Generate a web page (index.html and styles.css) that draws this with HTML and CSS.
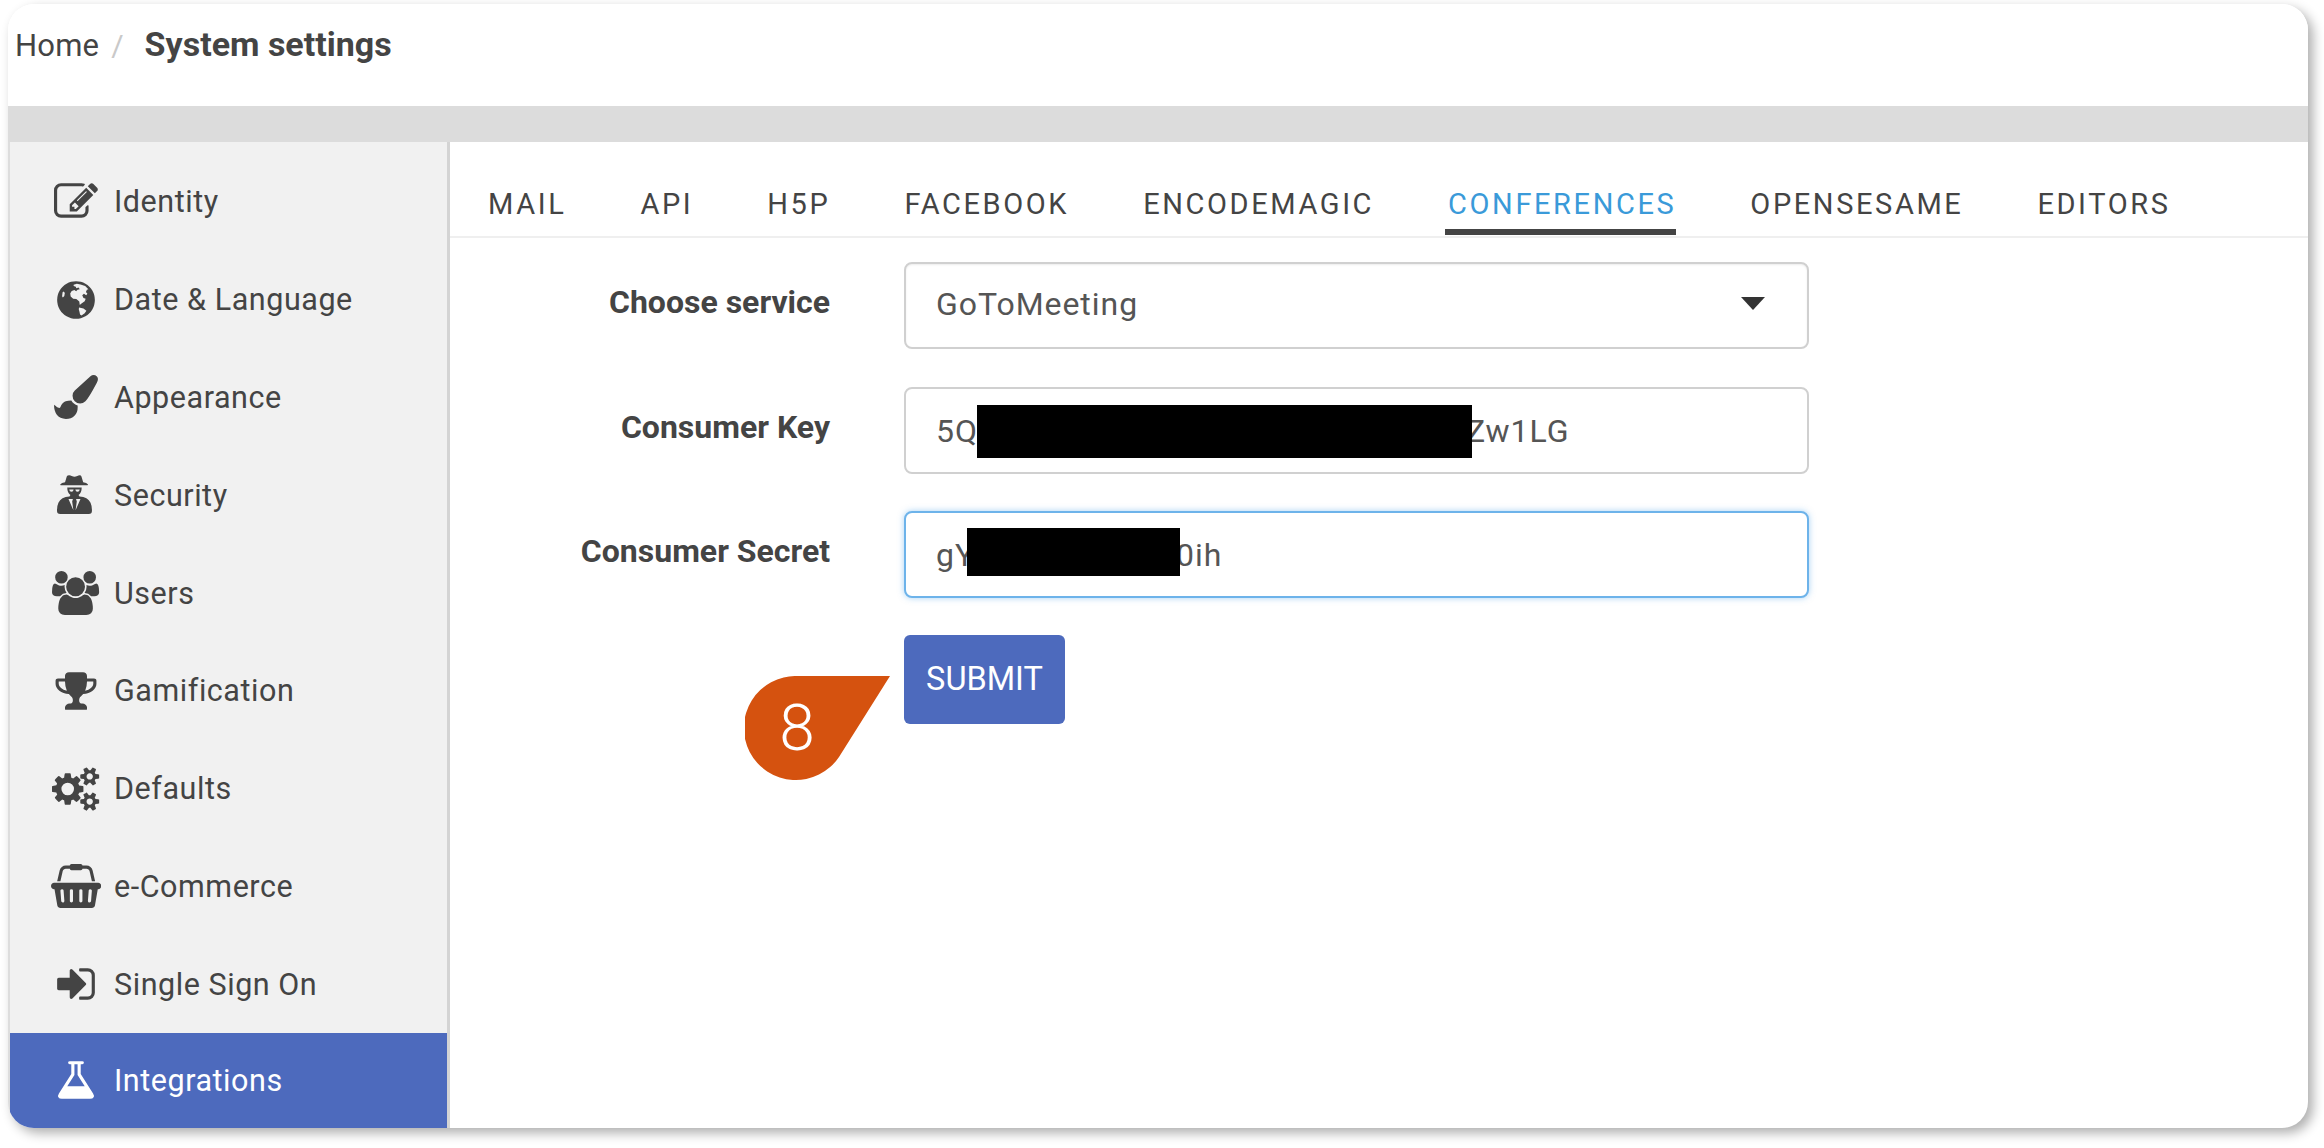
FILE: index.html
```html
<!DOCTYPE html>
<html lang="en">
<head>
<meta charset="utf-8">
<title>System settings</title>
<link rel="stylesheet" href="styles.css">
</head>
<body>
<div class="card">
  <header class="crumbs">
    <span class="crumb">Home</span>
    <span class="crumb-sep">/</span>
    <span class="crumb-current">System settings</span>
  </header>
  <div class="band"></div>
  <div class="content">
    <nav class="side">
      <a class="item"><span class="ico"><svg viewBox="0 0 1792 1792"><path d="M888 1184l116-116-152-152-116 116v56h96v96h56zm440-720q-16-16-33 1l-350 350q-17 17-1 33t33-1l350-350q17-17 1-33zm80 594v190q0 119-84.5 203.5t-203.5 84.5h-832q-119 0-203.5-84.5t-84.5-203.5v-832q0-119 84.5-203.5t203.5-84.5h832q63 0 117 25 15 7 18 23 3 17-9 29l-49 49q-14 14-32 8-23-6-45-6h-832q-66 0-113 47t-47 113v832q0 66 47 113t113 47h832q66 0 113-47t47-113v-126q0-13 9-22l64-64q15-15 35-7t20 29zm-96-738l288 288-672 672h-288v-288zm444 132l-92 92-288-288 92-92q28-28 68-28t68 28l152 152q28 28 28 68t-28 68z"/></svg></span>Identity</a>
      <a class="item"><span class="ico"><svg viewBox="0 0 1792 1792"><path fill-rule="evenodd" d="M896 128a768 768 0 1 0 .01 0zM800 270l130-40 150 30 190 70 130 130-60 20-40 90 60 70-50 60-90-60-70 60 50 110 90 40-40 100-130 90-70 60-20-140-120-100-130-20-100-90-20-120 60-100 110-40 70 50 60-60 90-20-50-70-90 30-20-60-90-30zM1020 1200l180 40 120 90-70 110-130 90-60-40-20-110-30-110zM350 580l50-30 40 60-20 120-60 60-30-50z"/></svg></span>Date &amp; Language</a>
      <a class="item"><span class="ico"><svg viewBox="0 0 1792 1792"><path d="M1615 0q70 0 122.5 46.5t52.5 116.5q0 63-45 151-332 629-465 752-97 91-218 91-126 0-216.5-92.5t-90.5-219.5q0-128 92-212l638-579q59-54 130-54zm-909 1034q39 76 106.5 130t150.5 76l1 71q4 213-129.5 347t-348.5 134q-123 0-218-46.5t-152.5-127.5-86.5-183-29-220q7 5 41 30t62 44.5 59 36.5 46 17q41 0 55-37 25-66 57.5-112.5t69.5-76 88-47.5 103-25.5 125-10.5z"/></svg></span>Appearance</a>
      <a class="item"><span class="ico"><svg viewBox="0 0 1792 1792"><path fill-rule="evenodd" d="M620 90q50 0 100 30 60 30 114 30t114-30q50-30 100-30 50 0 70 50l70 240q140 25 200 90l-20 30H270l-20-30q60-65 200-90l70-240q20-50 100-50zM540 590H1128q0 220-130 310l40 60q340 20 450 250 58 120 58 330 0 130-130 130H252q-130 0-130-130 0-210 58-330 110-230 450-250l40-60q-130-90-130-310zM620 670H800q-10 90-90 90-80 0-90-90zM868 670H1048q-10 90-90 90-80 0-90-90zM590 1060H770L740 1160 790 1520zM1078 1060H898L928 1160 878 1520z"/></svg></span>Security</a>
      <a class="item"><span class="ico"><svg viewBox="0 0 1920 1792"><path transform="translate(64 0)" d="M529 896q-162 5-265 128h-134q-82 0-138-40.5t-56-118.5q0-353 124-353 6 0 43.5 21t97.5 42.5 119 21.5q67 0 133-23-5 37-5 66 0 139 81 256zm1071 637q0 120-73 189.5t-194 69.5h-874q-121 0-194-69.5t-73-189.5q0-53 3.5-103.5t14-109 26.5-108.5 43-97.5 62-81 85.5-53.5 111.5-20q10 0 43 21.5t73 48 107 48 135 21.5 135-21.5 107-48 73-48 43-21.5q61 0 111.5 20t85.5 53.5 62 81 43 97.5 26.5 108.5 14 109 3.5 103.5zm-1024-1277q0 106-75 181t-181 75-181-75-75-181 75-181 181-75 181 75 75 181zm704 384q0 159-112.5 271.5t-271.5 112.5-271.5-112.5-112.5-271.5 112.5-271.5 271.5-112.5 271.5 112.5 112.5 271.5zm576 225q0 78-56 118.5t-138 40.5h-134q-103-123-265-128 81-117 81-256 0-29-5-66 66 23 133 23 59 0 119-21.5t97.5-42.5 43.5-21q124 0 124 353zm-128-609q0 106-75 181t-181 75-181-75-75-181 75-181 181-75 181 75 75 181z"/></svg></span>Users</a>
      <a class="item"><span class="ico"><svg viewBox="0 0 1792 1792"><path d="M522 883q-74-162-74-371h-256v96q0 78 94.5 162t235.5 113zm1078-275v-96h-256q0 209-74 371 141-29 235.5-113t94.5-162zm128-128v128q0 71-41.5 143t-112 130-173 97.5-215.5 44.5q-42 54-95 95-38 34-52.5 72.5t-14.5 89.5q0 54 30.5 91t97.5 37q75 0 133.5 45.5t58.5 114.5v64q0 14-9 23t-23 9h-832q-14 0-23-9t-9-23v-64q0-69 58.5-114.5t133.5-45.5q67 0 97.5-37t30.5-91q0-51-14.5-89.5t-52.5-72.5q-53-41-95-95-113-5-215.5-44.5t-173-97.5-112-130-41.5-143v-128q0-40 28-68t68-28h288v-96q0-66 47-113t113-47h576q66 0 113 47t47 113v96h288q40 0 68 28t28 68z"/></svg></span>Gamification</a>
      <a class="item"><span class="ico"><svg viewBox="0 0 1920 1792"><path d="M896 896q0-106-75-181t-181-75-181 75-75 181 75 181 181 75 181-75 75-181zm768 512q0-52-38-90t-90-38-90 38-38 90q0 53 37.5 90.5t90.5 37.5 90.5-37.5 37.5-90.5zm0-1024q0-52-38-90t-90-38-90 38-38 90q0 53 37.5 90.5t90.5 37.5 90.5-37.5 37.5-90.5zm-384 421v185q0 10-7 19.5t-16 10.5l-155 24q-11 35-32 76 34 48 90 115 7 11 7 20 0 12-7 19-23 30-82.5 89.5t-78.5 59.5q-11 0-21-7l-115-90q-37 19-77 31-11 108-23 155-7 24-30 24h-186q-11 0-20-7.5t-10-17.5l-23-153q-34-10-75-31l-118 89q-7 7-20 7-11 0-21-8-144-133-144-160 0-9 7-19 10-14 41-53t47-61q-23-44-35-82l-152-24q-10-1-17-9.5t-7-19.5v-185q0-10 7-19.5t16-10.5l155-24q11-35 32-76-34-48-90-115-7-11-7-20 0-12 7-20 22-30 82-89t79-59q11 0 21 7l115 90q34-18 77-32 11-108 23-154 7-24 30-24h186q11 0 20 7.5t10 17.5l23 153q34 10 75 31l118-89q8-7 20-7 11 0 21 8 144 133 144 160 0 8-7 19-12 16-42 54t-45 60q23 48 34 82l152 23q10 2 17 10.5t7 19.5zm640 533v140q0 16-149 31-12 27-30 52 51 113 51 138 0 4-4 7-122 71-124 71-8 0-46-47t-52-68q-20 2-30 2t-30-2q-14 21-52 68t-46 47q-2 0-124-71-4-3-4-7 0-25 51-138-18-25-30-52-149-15-149-31v-140q0-16 149-31 13-29 30-52-51-113-51-138 0-4 4-7 4-2 35-20t59-34 30-16q8 0 46 46.5t52 67.5q20-2 30-2t30 2q51-71 92-112l6-2q4 0 124 70 4 3 4 7 0 25-51 138 17 23 30 52 149 15 149 31zm0-1024v140q0 16-149 31-12 27-30 52 51 113 51 138 0 4-4 7-122 71-124 71-8 0-46-47t-52-68q-20 2-30 2t-30-2q-14 21-52 68t-46 47q-2 0-124-71-4-3-4-7 0-25 51-138-18-25-30-52-149-15-149-31v-140q0-16 149-31 13-29 30-52-51-113-51-138 0-4 4-7 4-2 35-20t59-34 30-16q8 0 46 46.5t52 67.5q20-2 30-2t30 2q51-71 92-112l6-2q4 0 124 70 4 3 4 7 0 25-51 138 17 23 30 52 149 15 149 31z"/></svg></span>Defaults</a>
      <a class="item"><span class="ico"><svg viewBox="0 0 2048 1792"><path d="M1920 768q53 0 90.5 37.5t37.5 90.5-37.5 90.5-90.5 37.5h-15l-115 662q-8 46-44 76t-82 30h-1280q-46 0-82-30t-44-76l-115-662h-15q-53 0-90.5-37.5t-37.5-90.5 37.5-90.5 90.5-37.5h1792zm-1435 800q26-2 43.5-22.5t15.5-46.5l-32-416q-2-26-22.5-43.5t-46.5-15.5-43.5 22.5-15.5 46.5l32 416q2 25 20.5 42t43.5 17h5zm411-64v-416q0-26-19-45t-45-19-45 19-19 45v416q0 26 19 45t45 19 45-19 19-45zm384 0v-416q0-26-19-45t-45-19-45 19-19 45v416q0 26 19 45t45 19 45-19 19-45zm352 5l32-416q2-26-15.5-46.5t-43.5-22.5-46.5 15.5-22.5 43.5l-32 416q-2 26 15.5 46.5t43.5 22.5h5q25 0 43.5-17t20.5-42zm-1156-1217l-93 412h-132l101-441q19-88 89-143.5t160-55.5h167q0-26 19-45t45-19h384q26 0 45 19t19 45h167q90 0 160 55.5t89 143.5l101 441h-132l-93-412q-11-44-45.5-72t-79.5-28h-167q0 26-19 45t-45 19h-384q-26 0-45-19t-19-45h-167q-45 0-79.5 28t-45.5 72z"/></svg></span>e-Commerce</a>
      <a class="item"><span class="ico"><svg viewBox="0 0 1792 1792"><path d="M1312 896q0 26-19 45l-544 544q-19 19-45 19t-45-19-19-45v-288h-448q-26 0-45-19t-19-45v-384q0-26 19-45t45-19h448v-288q0-26 19-45t45-19 45 19l544 544q19 19 19 45zm352-352v704q0 119-84.5 203.5t-203.5 84.5h-320q-13 0-22.5-9.5t-9.5-22.5q0-4-1-20t-.5-26.5 3-23.5 10-19.5 20.5-6.5h320q66 0 113-47t47-113v-704q0-66-47-113t-113-47h-312l-11.5-1-11.5-3-8-5.5-7-9-2-13.5q0-4-1-20t-.5-26.5 3-23.5 10-19.5 20.5-6.5h320q119 0 203.5 84.5t84.5 203.5z"/></svg></span>Single Sign On</a>
      <a class="item active"><span class="ico"><svg viewBox="0 0 1792 1792"><path d="M1591 1448q56 89 21.5 152.5t-140.5 63.5h-1152q-106 0-140.5-63.5t21.5-152.5l503-793v-399h-64q-26 0-45-19t-19-45 19-45 45-19h512q26 0 45 19t19 45-19 45-45 19h-64v399zm-779-725l-272 429h712l-272-429-20-31v-437h-128v437z"/></svg></span>Integrations</a>
    </nav>
    <main class="main">
      <div class="tabs">
        <span class="tab">MAIL</span>
        <span class="tab">API</span>
        <span class="tab">H5P</span>
        <span class="tab">FACEBOOK</span>
        <span class="tab">ENCODEMAGIC</span>
        <span class="tab on">CONFERENCES</span>
        <span class="tab">OPENSESAME</span>
        <span class="tab">EDITORS</span>
      </div>
      <form class="form">
        <div class="row first">
          <label class="lbl">Choose service</label>
          <div class="field select"><span>GoToMeeting</span><i class="caret"></i></div>
        </div>
        <div class="row">
          <label class="lbl">Consumer Key</label>
          <div class="field"><span>5Q</span><b class="redact r-key"></b><span>Zw1LG</span></div>
        </div>
        <div class="row">
          <label class="lbl">Consumer Secret</label>
          <div class="field focus"><span>gY</span><b class="redact r-secret"></b><span>0ih</span></div>
        </div>
        <div class="row actions">
          <span class="lbl"></span>
          <div class="submit-wrap">
            <span class="btn">SUBMIT</span>
            <span class="marker"><svg viewBox="0 0 146 104"><path d="M52 0H145L94 81A52 52 0 1 1 52 0Z"/></svg><em>8</em></span>
          </div>
        </div>
      </form>
    </main>
  </div>
</div>
</body>
</html>
```

FILE: styles.css
```css
* { box-sizing: border-box; }
html, body { margin: 0; height: 100%; background: #fff; }
body {
  padding: 4px 16px 20px 8px;
  font-family: Roboto, "Liberation Sans", sans-serif;
  color: #444;
  font-size: 30px;
}
.card {
  height: 1124px;
  display: flex;
  flex-direction: column;
  background: #fff;
  border-radius: 26px;
  overflow: clip;
  box-shadow: 5px 5px 12px rgba(0, 0, 0, .32);
}
.crumbs {
  height: 102px;
  flex: none;
  display: flex;
  align-items: baseline;
  padding: 22px 0 0 7px;
  background: #fff;
  line-height: 36px;
}
.crumb { font-size: 31px; letter-spacing: .2px; }
.crumb-sep { color: #c9c9c9; margin: 0 21px 0 12px; }
.crumb-current { font-size: 34px; font-weight: 700; }
.band { height: 36px; flex: none; background: #dcdcdc; }
.content { flex: 1; display: flex; min-height: 0; }
.side {
  width: 442px;
  flex: none;
  display: flex;
  flex-direction: column;
  padding-top: 11px;
  background: #f1f1f1;
  border-left: 2px solid #ddd;
  border-right: 3px solid #d4d4d4;
}
.item {
  height: 97.8px;
  flex: none;
  display: flex;
  align-items: center;
  font-size: 30.5px;
  letter-spacing: .55px;
  color: #444;
}
.ico {
  width: 104px;
  flex: none;
  display: flex;
  justify-content: center;
  padding-left: 28px;
}
.ico svg { height: 44px; width: auto; fill: #444; display: block; flex: none; }
.item.active { flex: 1; height: auto; padding-bottom: 1px; background: #4d6abd; color: #fff; }
.item.active svg { fill: #fff; }
.main { flex: 1; min-width: 0; }
.tabs {
  height: 96px;
  display: flex;
  align-items: flex-start;
  gap: 74px;
  padding: 45px 0 0 38px;
  border-bottom: 2px solid #efefef;
}
.tab {
  height: 48px;
  font-size: 29px;
  line-height: 34px;
  letter-spacing: 2.6px;
  color: #444;
}
.tab.on { color: #3a9ad9; border-bottom: 6px solid #444; margin-left: -3px; padding-left: 3px; }
.form { padding-top: 24px; }
.row { display: flex; margin-bottom: 37px; }
.row.first { margin-bottom: 38px; }
.lbl {
  width: 380px;
  flex: none;
  text-align: right;
  font-weight: 700;
  font-size: 32px;
  line-height: 80px;
  margin-right: 74px;
}
.field {
  width: 905px;
  height: 87px;
  display: flex;
  align-items: center;
  padding: 0 30px;
  border: 2px solid #d0d0d0;
  border-radius: 8px;
  font-size: 32px;
  letter-spacing: .95px;
  color: #555;
  background: #fff;
}
.select {
  justify-content: space-between;
  padding-bottom: 4px;
  box-shadow: inset 0 1px 2px rgba(0, 0, 0, .08);
}
.caret {
  width: 0;
  height: 0;
  margin-right: 12px;
  border-left: 12px solid transparent;
  border-right: 12px solid transparent;
  border-top: 13px solid #333;
}
.focus { border-color: #6db3ea; box-shadow: 0 0 6px rgba(80, 165, 235, .5); }
.redact { display: block; height: 53px; background: #000; position: relative; }
.r-key { width: 495px; margin: 1px -6px 0 -1px; }
.r-secret { width: 213px; margin: -5px -4px 0 -8px; height: 48px; }
.actions { margin: 1px 0 0; }
.submit-wrap { position: relative; }
.btn {
  display: block;
  width: 161px;
  height: 89px;
  line-height: 88px;
  text-align: center;
  background: #4d6abd;
  color: #fff;
  font-size: 32.5px;
  border-radius: 6px;
}
.marker { position: absolute; left: -159px; top: 41px; width: 146px; height: 104px; }
.marker svg { display: block; width: 146px; height: 104px; fill: #d5520f; }
.marker em {
  position: absolute;
  left: 0;
  top: 0;
  width: 104px;
  height: 104px;
  line-height: 106px;
  text-align: center;
  font-style: normal;
  font-weight: 300;
  font-size: 64px;
  color: #fff;
}
```
